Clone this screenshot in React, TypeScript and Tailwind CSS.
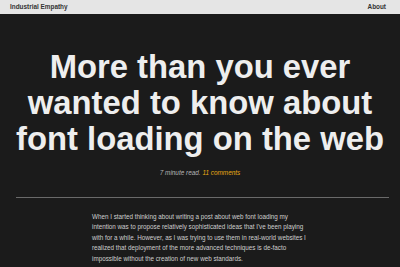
export default function App() {
  return (
    <div
      className="min-h-screen bg-[#1b1b1b] overflow-hidden"
      style={{ fontFamily: '"Liberation Sans", Arial, sans-serif' }}
    >
      <header className="h-[14px] bg-[#e5e5e5] flex items-center justify-between px-[10px] text-[6.4px] font-bold text-[#333]">
        <span>Industrial Empathy</span>
        <span className="mr-[4px]">About</span>
      </header>

      <h1 className="mt-[35px] px-[16px] text-center text-[32.8px] leading-[36px] font-bold text-[#eeeeee]">
        More than you ever wanted to know about font loading on the web
      </h1>

      <p className="mt-[11px] text-center text-[6.4px] italic text-[#b5b5b5]">
        7 minute read. <span className="text-[#e5a914]">11 comments</span>
      </p>

      <hr className="mt-[19px] ml-[16px] mr-[11px] border-0 h-px bg-[#6a6a6a]" />

      <p className="mt-[14px] ml-[92px] w-[220px] text-[6.3px] leading-[10.6px] text-[#cfcfcf]">
        When I started thinking about writing a post about web font loading my
        intention was to propose relatively sophisticated ideas that I've been
        playing with for a while. However, as I was trying to use them in
        real-world websites I realized that deployment of the more advanced
        techniques is de-facto impossible without the creation of new web
        standards.
      </p>
    </div>
  );
}
